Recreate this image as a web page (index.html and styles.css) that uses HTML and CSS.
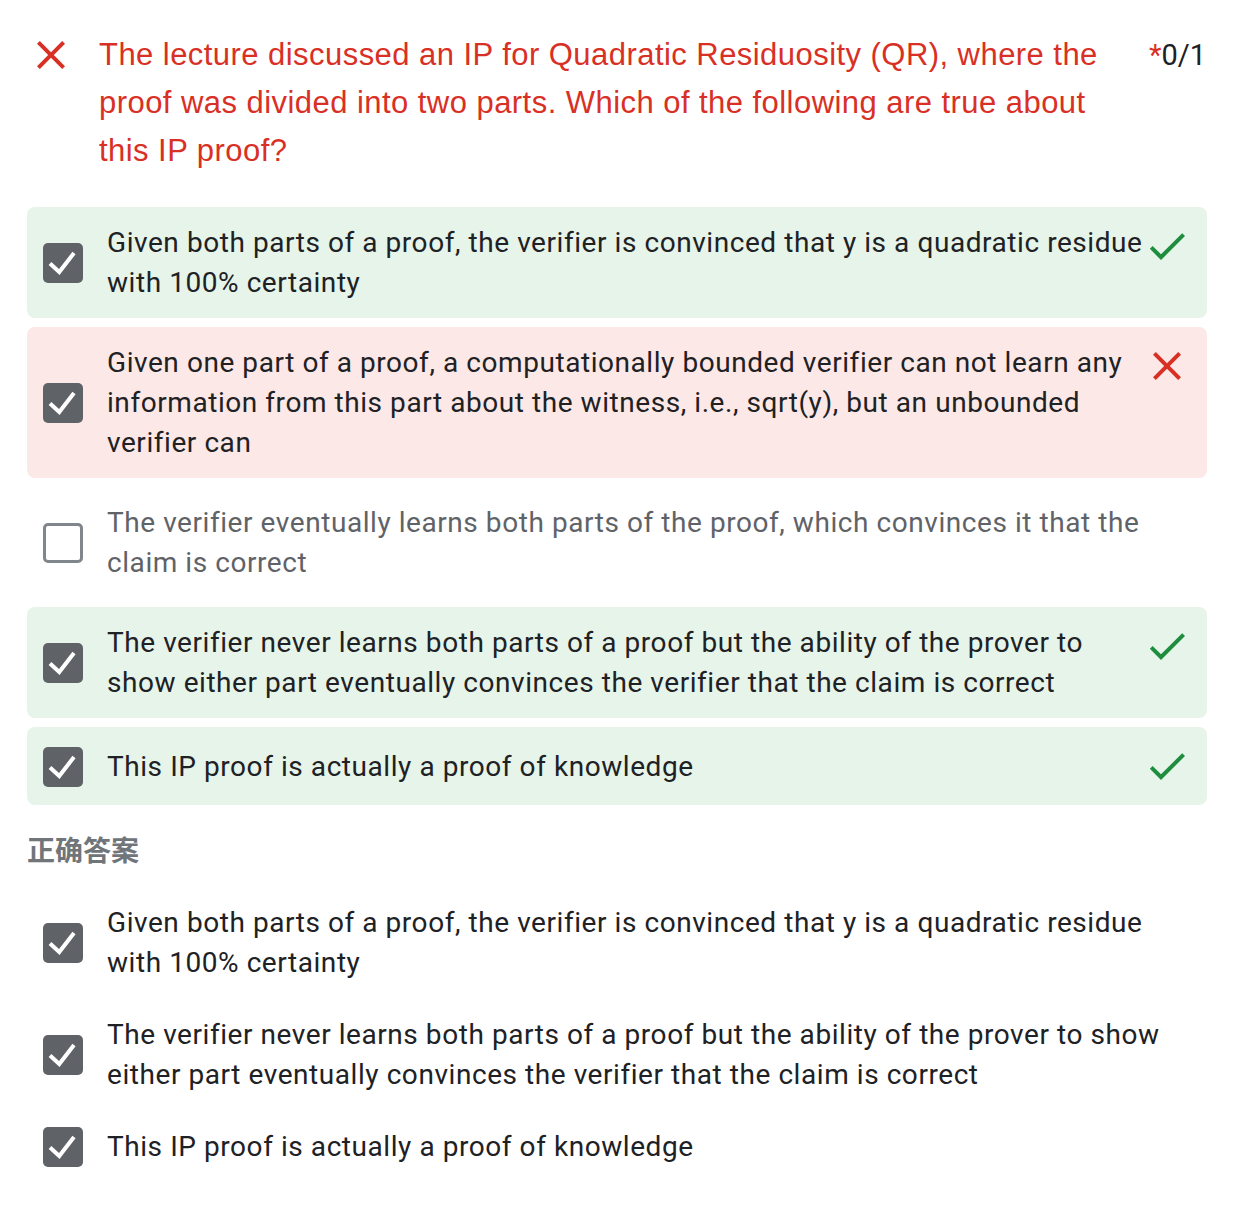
FILE: index.html
```html
<!DOCTYPE html>
<html>
<head>
<meta charset="utf-8">
<link rel="stylesheet" href="styles.css">
</head>
<body>
<div class="page">
  <div class="question">
    <svg class="q-icon" width="48" height="48" viewBox="0 0 24 24"><path fill="#d93025" d="M19 6.41L17.59 5 12 10.59 6.41 5 5 6.41 10.59 12 5 17.59 6.41 19 12 13.41 17.59 19 19 17.59 13.41 12z"/></svg>
    <div class="q-title">The lecture discussed an IP for Quadratic Residuosity (QR), where the proof was divided into two parts. Which of the following are true about this IP proof?</div>
    <div class="score"><span class="star">*</span>0/1</div>
  </div>

  <div class="options">
    <div class="option correct">
      <svg class="cb" width="40" height="40" viewBox="0 0 40 40"><rect width="40" height="40" rx="5" fill="#5f6368"/><polyline points="7,20.5 16.3,29 31,10" fill="none" stroke="#fff" stroke-width="4"/></svg>
      <div class="opt-text">Given both parts of a proof, the verifier is convinced that y is a quadratic residue with 100% certainty</div>
      <svg class="mark" width="48" height="48" viewBox="0 0 24 24"><path fill="#1e8e3e" d="M9 16.17L4.83 12l-1.42 1.41L9 19 21 7l-1.41-1.41z"/></svg>
    </div>
    <div class="option wrong">
      <svg class="cb" width="40" height="40" viewBox="0 0 40 40"><rect width="40" height="40" rx="5" fill="#5f6368"/><polyline points="7,20.5 16.3,29 31,10" fill="none" stroke="#fff" stroke-width="4"/></svg>
      <div class="opt-text">Given one part of a proof, a computationally bounded verifier can not learn any information from this part about the witness, i.e., sqrt(y), but an unbounded verifier can</div>
      <svg class="mark" width="48" height="48" viewBox="0 0 24 24"><path fill="#d93025" d="M19 6.41L17.59 5 12 10.59 6.41 5 5 6.41 10.59 12 5 17.59 6.41 19 12 13.41 17.59 19 19 17.59 13.41 12z"/></svg>
    </div>
    <div class="option plain">
      <span class="cb-empty"></span>
      <div class="opt-text muted">The verifier eventually learns both parts of the proof, which convinces it that the claim is correct</div>
      <span class="mark-space"></span>
    </div>
    <div class="option correct">
      <svg class="cb" width="40" height="40" viewBox="0 0 40 40"><rect width="40" height="40" rx="5" fill="#5f6368"/><polyline points="7,20.5 16.3,29 31,10" fill="none" stroke="#fff" stroke-width="4"/></svg>
      <div class="opt-text">The verifier never learns both parts of a proof but the ability of the prover to show either part eventually convinces the verifier that the claim is correct</div>
      <svg class="mark" width="48" height="48" viewBox="0 0 24 24"><path fill="#1e8e3e" d="M9 16.17L4.83 12l-1.42 1.41L9 19 21 7l-1.41-1.41z"/></svg>
    </div>
    <div class="option correct">
      <svg class="cb" width="40" height="40" viewBox="0 0 40 40"><rect width="40" height="40" rx="5" fill="#5f6368"/><polyline points="7,20.5 16.3,29 31,10" fill="none" stroke="#fff" stroke-width="4"/></svg>
      <div class="opt-text">This IP proof is actually a proof of knowledge</div>
      <svg class="mark" width="48" height="48" viewBox="0 0 24 24"><path fill="#1e8e3e" d="M9 16.17L4.83 12l-1.42 1.41L9 19 21 7l-1.41-1.41z"/></svg>
    </div>
  </div>

  <div class="answers-head">正确答案</div>
  <div class="answers">
    <div class="answer">
      <svg class="cb" width="40" height="40" viewBox="0 0 40 40"><rect width="40" height="40" rx="5" fill="#5f6368"/><polyline points="7,20.5 16.3,29 31,10" fill="none" stroke="#fff" stroke-width="4"/></svg>
      <div class="opt-text">Given both parts of a proof, the verifier is convinced that y is a quadratic residue with 100% certainty</div>
    </div>
    <div class="answer">
      <svg class="cb" width="40" height="40" viewBox="0 0 40 40"><rect width="40" height="40" rx="5" fill="#5f6368"/><polyline points="7,20.5 16.3,29 31,10" fill="none" stroke="#fff" stroke-width="4"/></svg>
      <div class="opt-text">The verifier never learns both parts of a proof but the ability of the prover to show either part eventually convinces the verifier that the claim is correct</div>
    </div>
    <div class="answer">
      <svg class="cb" width="40" height="40" viewBox="0 0 40 40"><rect width="40" height="40" rx="5" fill="#5f6368"/><polyline points="7,20.5 16.3,29 31,10" fill="none" stroke="#fff" stroke-width="4"/></svg>
      <div class="opt-text">This IP proof is actually a proof of knowledge</div>
    </div>
  </div>
</div>
</body>
</html>
```

FILE: styles.css
```css
* { box-sizing: border-box; }
html, body { margin: 0; padding: 0; background: #fff; }
body { font-family: Roboto, "Noto Sans", sans-serif; color: #202124; }

.page {
  width: 1180px;
  margin-left: 27px;
  padding-top: 31px;
}

.question {
  display: flex;
  align-items: flex-start;
}
.q-icon { flex: none; display: block; }
.q-title {
  flex: 1;
  margin-left: 24px;
  margin-right: 12px;
  font-family: "Liberation Sans", Arial, sans-serif;
  font-size: 31px;
  letter-spacing: 0.45px;
  line-height: 48px;
  color: #d93025;
}
.score {
  flex: none;
  font-size: 29px;
  line-height: 48px;
  color: #202124;
  padding-right: 1px;
}
.star { color: #d93025; }

.options {
  margin-top: 32px;
  display: flex;
  flex-direction: column;
  gap: 9px;
}
.option {
  display: flex;
  align-items: center;
  border-radius: 8px;
  padding: 16px 16px 15px 16px;
}
.option.correct { background: #e6f4ea; }
.option.wrong { background: #fce8e6; }
.cb { flex: none; display: block; align-self: center; }
.cb-empty {
  flex: none;
  width: 40px;
  height: 40px;
  border: 3px solid #80868b;
  border-radius: 5px;
  align-self: center;
}
.opt-text {
  flex: 1;
  margin-left: 24px;
  font-size: 28px;
  letter-spacing: 0.56px;
  line-height: 40px;
  color: #202124;
}
.opt-text.muted { color: #5f6368; }
.mark { flex: none; display: block; align-self: flex-start; margin-top: -1px; }
.mark-space { flex: none; width: 48px; height: 48px; align-self: flex-start; }

.answers-head {
  margin-top: 24px;
  font-family: "Noto Sans CJK SC", sans-serif;
  font-size: 28px;
  font-weight: 700;
  line-height: 40px;
  color: #70757a;
}
.answers {
  margin-top: 18px;
  display: flex;
  flex-direction: column;
}
.answer {
  display: flex;
  align-items: flex-start;
  padding: 16px;
}
```
